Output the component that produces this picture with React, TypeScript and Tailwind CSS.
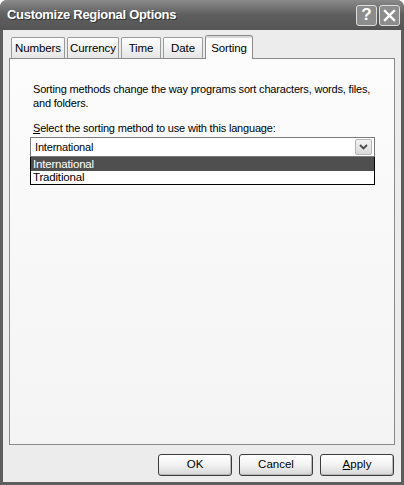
import React from "react";

const font = { fontFamily: "'Liberation Sans', Arial, sans-serif" };

function Tab({ label, active = false, w }: { label: string; active?: boolean; w: string }) {
  if (active) {
    return (
      <div
        className={`relative -mb-px flex h-[24px] ${w} items-start justify-center rounded-t-[3px] border border-b-0 border-[#8a8a8a] bg-[#fbfbfb] pt-[4px] text-[11.5px] tracking-[-0.1px] text-black z-10`}
      >
        <span className="absolute left-0 right-0 top-0 h-[2px] rounded-t-[3px] bg-[#d8d8d8]" />
        {label}
      </div>
    );
  }
  return (
    <div
      className={`flex h-[21px] ${w} items-center justify-center rounded-t-[2px] border border-b-0 border-[#9a9a9a] bg-gradient-to-b from-[#fdfdfd] to-[#e6e6e6] pt-[2px] text-[11.5px] tracking-[-0.1px] text-black`}
    >
      {label}
    </div>
  );
}

function Button({ children }: { children: React.ReactNode }) {
  return (
    <button
      type="button"
      className="flex h-[22px] w-[74px] items-center justify-center rounded-[3px] border border-[#3c3c3c] bg-gradient-to-b from-[#ffffff] via-[#f2f2f2] to-[#d6d6d6] text-[11.5px] text-black shadow-[inset_-1px_-1px_0_#b8b8b8]"
    >
      {children}
    </button>
  );
}

export default function App() {
  return (
    <div className="h-[485px] w-[404px] overflow-hidden bg-white" style={font}>
      <div className="flex h-full flex-col rounded-t-[7px] border-x-[3px] border-b-[3px] border-[#5e5e5e] bg-[#ececec]">
        <div className="-mx-[3px] flex h-[30px] items-center justify-between rounded-t-[7px] bg-gradient-to-b from-[#8a8a8a] via-[#5e5e5e] to-[#555555] pl-[7px] pr-[4px]">
          <span className="text-[13px] font-bold tracking-[-0.3px] text-white [text-shadow:1px_1px_0_#333]">
            Customize Regional Options
          </span>
          <div className="flex gap-[2px]">
            <div className="flex h-[21px] w-[21px] items-center justify-center rounded-[3px] border border-[#dcdcdc] bg-[#8c8c8c] text-[17px] font-bold text-white">
              ?
            </div>
            <div className="flex h-[21px] w-[21px] items-center justify-center rounded-[3px] border border-[#dcdcdc] bg-[#8c8c8c]">
              <svg width="13" height="13" viewBox="0 0 13 13">
                <path d="M2 2 L11 11 M11 2 L2 11" stroke="white" strokeWidth="2.4" strokeLinecap="square" />
              </svg>
            </div>
          </div>
        </div>

        <div className="flex flex-1 flex-col px-[6px] pt-[5px]">
          <div className="flex items-end gap-[2px] pl-[2px]">
            <Tab label="Numbers" w="w-[54px]" />
            <Tab label="Currency" w="w-[52px]" />
            <Tab label="Time" w="w-[40px]" />
            <Tab label="Date" w="w-[40px]" />
            <Tab label="Sorting" w="w-[48px]" active />
          </div>
          <div className="h-[387px] border border-[#8a8a8a] bg-gradient-to-b from-[#fcfcfc] to-[#f4f4f4] px-[20px] pt-[23px] text-[11px] leading-[14px] tracking-[-0.18px] text-black">
            <p className="whitespace-nowrap pl-[3px]">
              Sorting methods change the way programs sort characters, words, files,
              <br />
              and folders.
            </p>
            <p className="mt-[11px] whitespace-nowrap pl-[3px]">
              <span className="underline">S</span>elect the sorting method to use with this language:
            </p>
            <div className="relative mt-[2px] w-[345px]">
              <div className="flex h-[20px] items-center justify-between border border-[#7a7a7a] bg-white pl-[4px] pr-[2px]">
                <span>International</span>
                <div className="flex h-[16px] w-[17px] items-center justify-center rounded-[2px] border border-[#b5b5b5] bg-gradient-to-b from-[#f2f2f2] to-[#d9d9d9]">
                  <svg width="9" height="6" viewBox="0 0 9 6">
                    <path d="M1 1 L4.5 4.5 L8 1" stroke="#4a4a4a" strokeWidth="1.8" fill="none" />
                  </svg>
                </div>
              </div>
              <div className="border border-t-0 border-black bg-white text-[11.5px]">
                <div className="h-[14px] bg-[#4f4f4f] pl-[2px] leading-[14px] text-white">International</div>
                <div className="h-[13px] pl-[2px] leading-[13px]">Traditional</div>
              </div>
            </div>
          </div>
          <div className="flex justify-end gap-[7px] pr-[1px] pt-[9px]">
            <Button>OK</Button>
            <Button>Cancel</Button>
            <Button>
              <span className="underline">A</span>pply
            </Button>
          </div>
        </div>
      </div>
    </div>
  );
}
